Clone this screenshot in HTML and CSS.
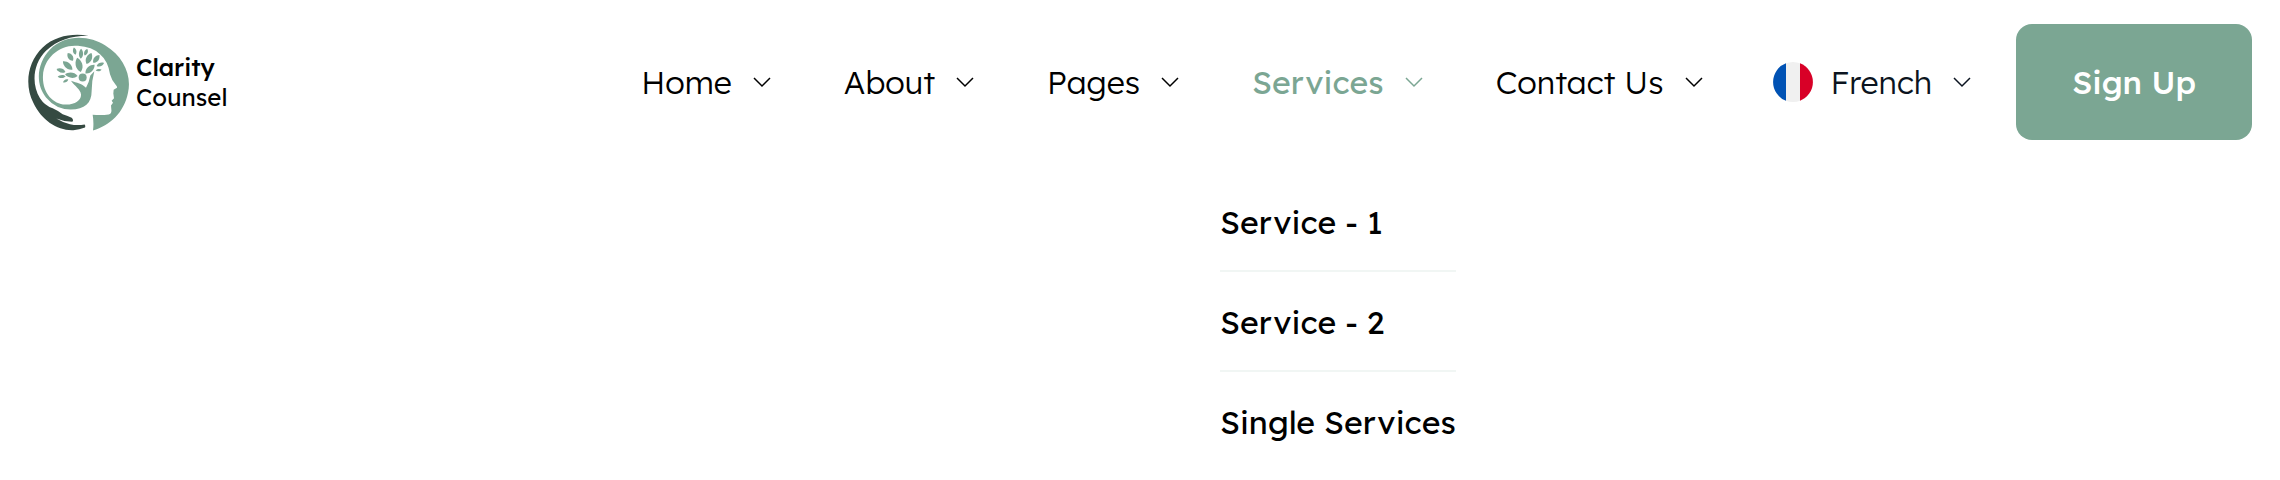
FILE: index.html
```html
<!DOCTYPE html>
<html lang="en">
<head>
<meta charset="utf-8">
<title>Clarity Counsel</title>
<link rel="stylesheet" href="styles.css">
</head>
<body>
<header class="site-header">
  <a class="brand" href="#">
    <svg class="brand-mark" viewBox="24 26 303 290" aria-hidden="true">
      <defs><path id="leaf" d="M0 -10C6 -6 9 4 0 10C-9 4 -6 -6 0 -10Z"/></defs>
      <path fill="#354a42" d="M206 31C160 23 106 30 68 66C22 110 13 178 40 232C66 286 112 316 160 314Q178 313 195 306Q197 301 194 297Q170 301 150 296Q128 291 109 279Q130 288 157 289Q162 284 155 277Q140 270 128 266Q112 254 98 248Q74 240 60 218C34 176 38 116 78 76C112 44 156 30 206 31Z"/>
      <g fill="#7ba693">
        <path d="M219 315Q222 292 218 268Q246 270 266 267Q276 264 274 252L273 240L279 232L275 226L282 218L280 204L281 193L291 187Q292 183 288 179Q274 162 270 146Q264 106 240 86Q216 64 174 61C120 56 72 96 69 150C66 200 98 236 136 237C165 238 184 224 183 207C182 192 164 182 153 166C170 172 187 175 198 187Q208 168 211 150L223 137Q215 166 215 196C215 234 194 252 152 252Q108 252 78 216C44 172 52 112 90 72C136 24 210 30 256 60C310 92 336 150 324 202C312 262 270 300 219 315Z"/>
        <circle cx="188" cy="156" r="12"/>
        <use href="#leaf" transform="translate(177 118) rotate(-14) scale(1.750 2.200)"/>
        <use href="#leaf" transform="translate(183 85) rotate(2) scale(1.100 1.500)"/>
        <use href="#leaf" transform="translate(164 77) rotate(-12) scale(.9 1.100)"/>
        <use href="#leaf" transform="translate(198 80) rotate(22) scale(.9 1.050)"/>
        <use href="#leaf" transform="translate(151 94) rotate(-34) scale(1.300 1.400)"/>
        <use href="#leaf" transform="translate(207 99) rotate(24) scale(1.500 1.800)"/>
        <use href="#leaf" transform="translate(229 100) rotate(38) scale(1.300 1.500)"/>
        <use href="#leaf" transform="translate(143 120) rotate(-48) scale(1.500 1.900)"/>
        <use href="#leaf" transform="translate(123 135) rotate(-72) scale(1.100 1.400)"/>
        <use href="#leaf" transform="translate(154 149) rotate(-82) scale(1.400 1.900)"/>
        <use href="#leaf" transform="translate(125 153) rotate(-94) scale(.8 1.200)"/>
        <use href="#leaf" transform="translate(137 166) rotate(-118) scale(.7 .9)"/>
        <use href="#leaf" transform="translate(210 131) rotate(46) scale(1.500 1.900)"/>
        <use href="#leaf" transform="translate(241 117) rotate(68) scale(.9 1.200)"/>
        <use href="#leaf" transform="translate(236 134) rotate(82) scale(.6 .9)"/>
      </g>
    </svg>
    <span class="brand-name"><strong class="brand-strong">Clarity</strong><span>Counsel</span></span>
  </a>
  <nav class="nav" aria-label="Main">
    <ul class="menu">
      <li class="item"><a class="link" href="#">Home<svg class="chevron" viewBox="0 0 16 8"><path d="M0 0L8 8L16 0"/></svg></a></li>
      <li class="item"><a class="link" href="#">About<svg class="chevron" viewBox="0 0 16 8"><path d="M0 0L8 8L16 0"/></svg></a></li>
      <li class="item"><a class="link" href="#">Pages<svg class="chevron" viewBox="0 0 16 8"><path d="M0 0L8 8L16 0"/></svg></a></li>
      <li class="item"><a class="link link-active" href="#">Services<svg class="chevron" viewBox="0 0 16 8"><path d="M0 0L8 8L16 0"/></svg></a>
        <ul class="submenu">
          <li class="subitem"><a class="sublink" href="#">Service - 1</a></li>
          <li class="subitem"><a class="sublink" href="#">Service - 2</a></li>
          <li class="subitem"><a class="sublink" href="#">Single Services</a></li>
        </ul>
      </li>
      <li class="item"><a class="link" href="#">Contact Us<svg class="chevron" viewBox="0 0 16 8"><path d="M0 0L8 8L16 0"/></svg></a></li>
    </ul>
    <button class="language" type="button">
      <svg class="flag" viewBox="0 0 40 40" aria-hidden="true"><circle cx="20" cy="20" r="20" fill="#f0f0f0"/><path fill="#0052b4" d="M13 1.300A20 20 0 0 0 13 38.700Z"/><path fill="#d80027" d="M27 1.300A20 20 0 0 1 27 38.700Z"/></svg>
      French
      <svg class="chevron" viewBox="0 0 16 8"><path d="M0 0L8 8L16 0"/></svg>
    </button>
    <button class="signup" type="button">Sign Up</button>
  </nav>
</header>
</body>
</html>
```
FILE: styles.css
```css
* { box-sizing: border-box; }
body {
  margin: 0;
  min-height: 100vh;
  background: #fff;
  color: #000;
  font-family: Lexend, Inter, sans-serif;
  font-size: 32px;
  font-weight: 300;
  line-height: 40px;
}
a { color: inherit; text-decoration: none; }
ul { list-style: none; margin: 0; padding: 0; }
button { font: inherit; color: inherit; border: 0; background: none; padding: 0; cursor: pointer; }
.site-header { display: flex; align-items: center; justify-content: space-between; padding: 24px 28px; }
.brand { display: flex; align-items: center; gap: 7px; }
.brand-mark { width: 101px; height: 97px; }
.brand-name { display: flex; flex-direction: column; font-size: 24px; line-height: 30px; font-weight: 400; }
.brand-strong { font-weight: 500; }
.nav { display: flex; align-items: center; }
.menu { display: flex; gap: 74px; }
.item { position: relative; }
.link { display: flex; align-items: center; gap: 22px; white-space: nowrap; }
.link-active { color: #7ba693; font-weight: 400; }
.chevron { width: 16px; height: 8px; overflow: visible; fill: none; stroke: currentColor; stroke-width: 1.500; }
.submenu { position: absolute; top: 110px; left: -32px; }
.subitem { padding: 30px 0 28px; white-space: nowrap; font-weight: 400; }
.subitem + .subitem { border-top: 2px solid #f1f6f4; }
.sublink { display: block; }
.language { display: flex; align-items: center; margin-left: 71px; color: #0b1420; gap: 18px; }
.language .chevron { margin-left: 4px; }
.flag { width: 40px; height: 40px; }
.signup { margin-left: 46px; padding: 38px 56px; border-radius: 16px; background: #7ba693; color: #fff; font-weight: 500; white-space: nowrap; }
```
